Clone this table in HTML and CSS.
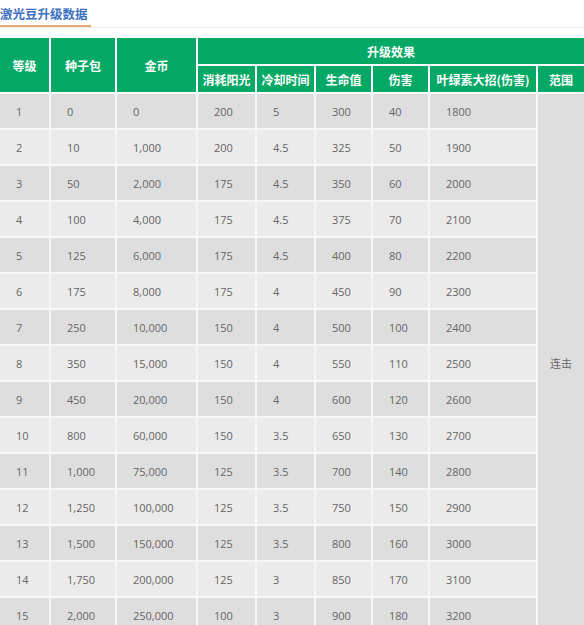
FILE: index.html
```html
<!DOCTYPE html>
<html lang="zh">
<head>
<meta charset="utf-8">
<link rel="stylesheet" href="styles.css">
</head>
<body>
<div class="title-bar"><h3 class="title">激光豆升级数据</h3></div>
<table class="data">
<colgroup>
<col style="width:50px"><col style="width:66px"><col style="width:81px"><col style="width:59px"><col style="width:59px"><col style="width:57px"><col style="width:57px"><col style="width:108px"><col style="width:47px">
</colgroup>
<thead>
<tr class="h1"><th rowspan="2">等级</th><th rowspan="2">种子包</th><th rowspan="2">金币</th><th colspan="6">升级效果</th></tr>
<tr class="h2"><th>消耗阳光</th><th>冷却时间</th><th>生命值</th><th>伤害</th><th>叶绿素大招(伤害)</th><th>范围</th></tr>
</thead>
<tbody>
<tr><td>1</td><td>0</td><td>0</td><td>200</td><td>5</td><td>300</td><td>40</td><td>1800</td><td class="range" rowspan="15">连击</td></tr>
<tr><td>2</td><td>10</td><td>1,000</td><td>200</td><td>4.5</td><td>325</td><td>50</td><td>1900</td></tr>
<tr><td>3</td><td>50</td><td>2,000</td><td>175</td><td>4.5</td><td>350</td><td>60</td><td>2000</td></tr>
<tr><td>4</td><td>100</td><td>4,000</td><td>175</td><td>4.5</td><td>375</td><td>70</td><td>2100</td></tr>
<tr><td>5</td><td>125</td><td>6,000</td><td>175</td><td>4.5</td><td>400</td><td>80</td><td>2200</td></tr>
<tr><td>6</td><td>175</td><td>8,000</td><td>175</td><td>4</td><td>450</td><td>90</td><td>2300</td></tr>
<tr><td>7</td><td>250</td><td>10,000</td><td>150</td><td>4</td><td>500</td><td>100</td><td>2400</td></tr>
<tr><td>8</td><td>350</td><td>15,000</td><td>150</td><td>4</td><td>550</td><td>110</td><td>2500</td></tr>
<tr><td>9</td><td>450</td><td>20,000</td><td>150</td><td>4</td><td>600</td><td>120</td><td>2600</td></tr>
<tr><td>10</td><td>800</td><td>60,000</td><td>150</td><td>3.5</td><td>650</td><td>130</td><td>2700</td></tr>
<tr><td>11</td><td>1,000</td><td>75,000</td><td>125</td><td>3.5</td><td>700</td><td>140</td><td>2800</td></tr>
<tr><td>12</td><td>1,250</td><td>100,000</td><td>125</td><td>3.5</td><td>750</td><td>150</td><td>2900</td></tr>
<tr><td>13</td><td>1,500</td><td>150,000</td><td>125</td><td>3.5</td><td>800</td><td>160</td><td>3000</td></tr>
<tr><td>14</td><td>1,750</td><td>200,000</td><td>125</td><td>3</td><td>850</td><td>170</td><td>3100</td></tr>
<tr><td>15</td><td>2,000</td><td>250,000</td><td>100</td><td>3</td><td>900</td><td>180</td><td>3200</td></tr>
</tbody>
</table>
</body>
</html>
```
FILE: styles.css
```css
html, body {
  margin: 0;
  padding: 0;
  background: #fff;
  font-family: "Open Sans", "Noto Sans CJK SC", sans-serif;
}
.title-bar {
  height: 27px;
  border-bottom: 1px solid #ececec;
  margin-bottom: 10px;
}
.title {
  display: inline-block;
  margin: 0;
  height: 25px;
  line-height: 27px;
  padding-right: 3px;
  font-size: 12.5px;
  font-weight: bold;
  color: #3d6fc2;
  border-bottom: 2px solid #e3a874;
  font-family: "Noto Sans CJK SC", sans-serif;
}
table.data {
  width: 584px;
  table-layout: fixed;
  border-collapse: collapse;
  font-size: 11px;
  color: #666;
}
.data th {
  background: #05a865;
  color: #fff;
  font-weight: bold;
  font-size: 12px;
  font-family: "Noto Sans CJK SC", sans-serif;
  border: 2px solid #fff;
  border-top: 0;
  text-align: center;
  padding: 0;
  white-space: nowrap;
}
.data tr.h1 th { height: 26px; }
.data tr.h2 th { height: 26px; }
.data th:first-child { border-left: 0; }
.data tr.h1 th:last-child,
.data tr.h2 th:last-child { border-right: 0; }
.data td {
  height: 34px;
  border: 2px solid #f7f7f7;
  padding: 0 0 0 16px;
  text-align: left;
  background: #dedede;
}
.data td:first-child { border-left: 0; }
.data tbody tr:nth-child(even) td { background: #ebebeb; }
.data td.range {
  background: #dedede !important;
  border-right: 0;
  text-align: center;
  padding: 0;
  font-family: "Noto Sans CJK SC", sans-serif;
}
```
